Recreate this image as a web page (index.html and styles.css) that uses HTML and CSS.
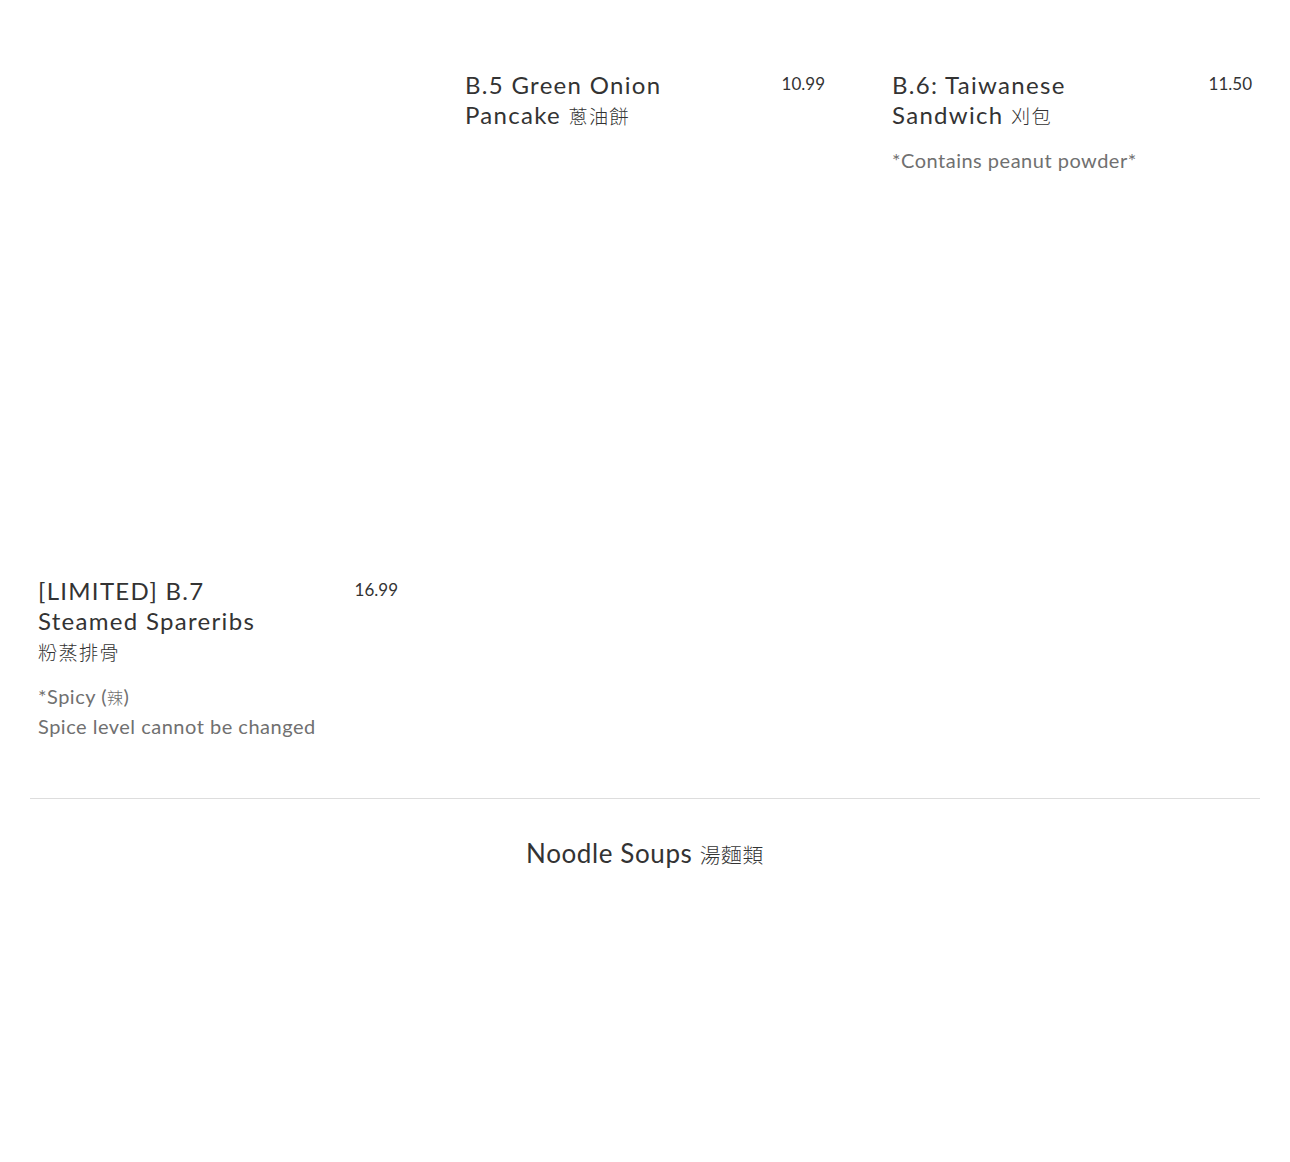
FILE: index.html
```html
<!DOCTYPE html>
<html lang="en">
<head>
  <meta charset="UTF-8" />
  <meta name="viewport" content="width=device-width, initial-scale=1.0"/>
  <title>Menu - Snacks</title>
  <link rel="stylesheet" href="styles.css">
</head>
<body>
  <div class="menu">
    <div class="items">
      <div class="item empty"></div>

      <div class="item">
        <div class="item-head">
          <h3 class="item-name">B.5 Green Onion Pancake <span class="zh">蔥油餅</span></h3>
          <span class="item-price">10.99</span>
        </div>
      </div>

      <div class="item">
        <div class="item-head">
          <h3 class="item-name">B.6: Taiwanese Sandwich <span class="zh">刈包</span></h3>
          <span class="item-price">11.50</span>
        </div>
        <p class="item-desc">*Contains peanut powder*</p>
      </div>

      <div class="item">
        <div class="item-head">
          <h3 class="item-name">[LIMITED] B.7 Steamed Spareribs <span class="zh">粉蒸排骨</span></h3>
          <span class="item-price">16.99</span>
        </div>
        <p class="item-desc">*Spicy (<span class="zh">辣</span>)<br>Spice level cannot be changed</p>
      </div>
    </div>

    <hr class="divider">

    <h2 class="section-title">Noodle Soups <span class="zh">湯麵類</span></h2>
  </div>
</body>
</html>
```

FILE: styles.css
```css
* {
  box-sizing: border-box;
}
body {
  margin: 0;
  background: #fff;
  color: #222;
  font-family: 'Lato', 'Noto Sans CJK TC', sans-serif;
}
.menu {
  padding: 70px 30px 0;
}
.items {
  display: grid;
  grid-template-columns: repeat(3, 360px);
  grid-template-rows: 506px auto;
  column-gap: 67px;
  padding: 0 8px;
}
.item-head {
  display: flex;
  justify-content: space-between;
  align-items: flex-start;
}
.item-name {
  width: 262px;
  margin: 0;
  font-size: 24px;
  font-weight: 400;
  line-height: 30px;
  letter-spacing: 1.3px;
  color: #333;
  word-break: keep-all;
}
.zh {
  font-size: 0.8em;
  font-weight: 300;
  line-height: 1;
  white-space: nowrap;
}
.item-price {
  font-size: 17px;
  font-weight: 400;
  line-height: 28px;
  color: #333;
}
.item-desc {
  margin: 15px 0 0;
  font-size: 20px;
  font-weight: 400;
  line-height: 30px;
  color: #707070;
  letter-spacing: 0.5px;
}
.divider {
  margin: 57px 0 0;
  border: none;
  border-top: 1px solid #ddd;
}
.section-title {
  margin: 36px 0 0;
  text-align: center;
  font-size: 26px;
  font-weight: 400;
  line-height: 36px;
  letter-spacing: 0.6px;
  color: #333;
}
```
